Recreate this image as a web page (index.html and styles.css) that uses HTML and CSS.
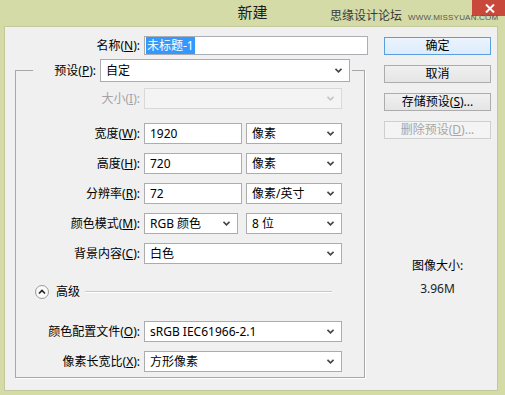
FILE: index.html
```html
<!DOCTYPE html>
<html lang="zh-CN">
<head>
    <meta charset="UTF-8">
    <title>新建</title>
    <link rel="stylesheet" href="styles.css">
</head>
<body>
    <div class="window">
        <!-- Title bar -->
        <div class="titlebar">
            <span></span>
            <h1 class="title">新建</h1>
            <div class="close">
                <svg width="10" height="9" viewBox="0 0 10 9"><path d="M1 0.5 L9 8.5 M9 0.5 L1 8.5" stroke="#fff" stroke-width="2"/></svg>
            </div>
            <div class="watermark">
                <span class="wm-cn">思缘设计论坛</span>
                <span class="wm-en">WWW.MISSYUAN.COM</span>
            </div>
        </div>

        <div class="frame">
            <div class="client">
                <!-- Form column -->
                <div class="form">
                    <div class="row name-row">
                        <label class="lbl name-lbl">名称(<u>N</u>):</label>
                        <div class="field w-name"><span class="selected">未标题-1</span></div>
                    </div>

                    <fieldset class="group">
                        <legend class="preset">
                            <label class="lbl preset-lbl">预设(<u>P</u>):</label>
                            <div class="field select w-preset">
                                <span>自定</span>
                                <svg class="chev" width="7" height="5" viewBox="0 0 7 5"><path d="M0.5 0.8 L3.5 3.8 L6.5 0.8" fill="none" stroke="#444" stroke-width="1.6"/></svg>
                            </div>
                        </legend>

                        <div class="row size-row disabled">
                            <label class="lbl">大小(<u>I</u>):</label>
                            <div class="field select w-wide off">
                                <span></span>
                                <svg class="chev" width="7" height="5" viewBox="0 0 7 5"><path d="M0.5 0.8 L3.5 3.8 L6.5 0.8" fill="none" stroke="#c4c4c4" stroke-width="1.6"/></svg>
                            </div>
                        </div>

                        <div class="rows">
                            <div class="row">
                                <label class="lbl">宽度(<u>W</u>):</label>
                                <div class="field w-num">1920</div>
                                <div class="field select w-unit">
                                    <span>像素</span>
                                    <svg class="chev" width="7" height="5" viewBox="0 0 7 5"><path d="M0.5 0.8 L3.5 3.8 L6.5 0.8" fill="none" stroke="#444" stroke-width="1.6"/></svg>
                                </div>
                            </div>
                            <div class="row">
                                <label class="lbl">高度(<u>H</u>):</label>
                                <div class="field w-num">720</div>
                                <div class="field select w-unit">
                                    <span>像素</span>
                                    <svg class="chev" width="7" height="5" viewBox="0 0 7 5"><path d="M0.5 0.8 L3.5 3.8 L6.5 0.8" fill="none" stroke="#444" stroke-width="1.6"/></svg>
                                </div>
                            </div>
                            <div class="row">
                                <label class="lbl">分辨率(<u>R</u>):</label>
                                <div class="field w-num">72</div>
                                <div class="field select w-unit">
                                    <span>像素/英寸</span>
                                    <svg class="chev" width="7" height="5" viewBox="0 0 7 5"><path d="M0.5 0.8 L3.5 3.8 L6.5 0.8" fill="none" stroke="#444" stroke-width="1.6"/></svg>
                                </div>
                            </div>
                            <div class="row">
                                <label class="lbl">颜色模式(<u>M</u>):</label>
                                <div class="field select w-mode">
                                    <span>RGB 颜色</span>
                                    <svg class="chev" width="7" height="5" viewBox="0 0 7 5"><path d="M0.5 0.8 L3.5 3.8 L6.5 0.8" fill="none" stroke="#444" stroke-width="1.6"/></svg>
                                </div>
                                <div class="field select w-unit">
                                    <span>8 位</span>
                                    <svg class="chev" width="7" height="5" viewBox="0 0 7 5"><path d="M0.5 0.8 L3.5 3.8 L6.5 0.8" fill="none" stroke="#444" stroke-width="1.6"/></svg>
                                </div>
                            </div>
                            <div class="row">
                                <label class="lbl">背景内容(<u>C</u>):</label>
                                <div class="field select w-wide">
                                    <span>白色</span>
                                    <svg class="chev" width="7" height="5" viewBox="0 0 7 5"><path d="M0.5 0.8 L3.5 3.8 L6.5 0.8" fill="none" stroke="#444" stroke-width="1.6"/></svg>
                                </div>
                            </div>
                        </div>

                        <!-- Advanced toggle -->
                        <div class="advanced">
                            <span class="adv-icon">
                                <svg width="14" height="14" viewBox="0 0 14 14"><circle cx="7" cy="7" r="6.5" fill="#fafafa" stroke="#9a9a9a"/><path d="M4 8.5 L7 5.5 L10 8.5" fill="none" stroke="#222" stroke-width="1.6"/></svg>
                            </span>
                            <span class="adv-text">高级</span>
                            <span class="adv-line"></span>
                        </div>

                        <div class="rows adv-rows">
                            <div class="row">
                                <label class="lbl">颜色配置文件(<u>O</u>):</label>
                                <div class="field select w-wide">
                                    <span>sRGB IEC61966-2.1</span>
                                    <svg class="chev" width="7" height="5" viewBox="0 0 7 5"><path d="M0.5 0.8 L3.5 3.8 L6.5 0.8" fill="none" stroke="#444" stroke-width="1.6"/></svg>
                                </div>
                            </div>
                            <div class="row">
                                <label class="lbl">像素长宽比(<u>X</u>):</label>
                                <div class="field select w-wide">
                                    <span>方形像素</span>
                                    <svg class="chev" width="7" height="5" viewBox="0 0 7 5"><path d="M0.5 0.8 L3.5 3.8 L6.5 0.8" fill="none" stroke="#444" stroke-width="1.6"/></svg>
                                </div>
                            </div>
                        </div>
                    </fieldset>
                </div>

                <!-- Buttons column -->
                <div class="side">
                    <button class="btn btn-default">确定</button>
                    <button class="btn">取消</button>
                    <button class="btn">存储预设(<u>S</u>)...</button>
                    <button class="btn" disabled>删除预设(<u>D</u>)...</button>

                    <div class="info">
                        <p class="info-label">图像大小:</p>
                        <p class="info-value">3.96M</p>
                    </div>
                </div>
            </div>
        </div>
    </div>
</body>
</html>
```

FILE: styles.css
```css
/* Reset */
* {
    box-sizing: border-box;
    margin: 0;
    padding: 0;
}

body {
    font-family: "Noto Sans", "Noto Sans CJK SC", sans-serif;
    font-size: 12px;
    line-height: 16px;
    color: #000;
    background: #d5dba6;
}

/* Window frame */
.window {
    width: 505px;
    height: 395px;
    display: flex;
    flex-direction: column;
    background: #d5dba6;
}

.titlebar {
    position: relative;
    height: 26px;
    display: grid;
    grid-template-columns: 1fr auto 1fr;
}

.title {
    font-size: 15px;
    font-weight: normal;
    line-height: 24px;
    color: #1c1c1c;
}

.close {
    justify-self: end;
    width: 33px;
    height: 16px;
    background: #c9483c;
    display: flex;
    align-items: center;
    justify-content: center;
    padding-left: 2px;
}

.watermark {
    position: absolute;
    left: 330px;
    top: 7px;
    display: flex;
    align-items: baseline;
    gap: 6px;
}

.wm-cn {
    font-family: "Noto Sans CJK SC", sans-serif;
    font-size: 12px;
    color: #3a3a3a;
}

.wm-en {
    font-family: "Liberation Sans", sans-serif;
    font-size: 8px;
    letter-spacing: 0.2px;
    color: #555;
}

.frame {
    flex: 1;
    padding: 0 7px 4px 4px;
    display: flex;
}

.client {
    flex: 1;
    display: flex;
    background: #f0f0f0;
    border: 1px solid #c3c99a;
}

/* Form column */
.form {
    width: 379px;
    padding-top: 9px;
}

.row {
    display: flex;
    align-items: center;
    height: 21px;
}

.lbl {
    width: 124px;
    margin-right: 4px;
    text-align: right;
    white-space: nowrap;
}

.name-row {
    height: 19px;
}

.name-lbl {
    width: 135px;
}

.field {
    height: 21px;
    display: flex;
    align-items: center;
    padding: 0 5px;
    background: #fff;
    border: 1px solid #abadb3;
    white-space: nowrap;
}

.select {
    justify-content: space-between;
    border-color: #acacac;
    padding-right: 7px;
}

.field.off {
    background: #f4f4f4;
    border-color: #d9d9d9;
}

.w-name {
    width: 224px;
    height: 19px;
    padding-left: 1px;
}

.selected {
    background: #3399ff;
    color: #fff;
    padding: 0 1px;
    line-height: 17px;
}

.w-preset {
    width: 250px;
    height: 23px;
}

.w-wide {
    width: 198px;
}

.w-num {
    width: 98px;
}

.w-unit {
    width: 96px;
    margin-left: 4px;
}

.w-mode {
    width: 94px;
}

.w-mode + .w-unit {
    margin-left: 8px;
}

/* Group box */
.group {
    width: 350px;
    margin: 4px 0 0 10px;
    padding: 6px 0 5px 0;
    border: 1px solid #a7a7a7;
    box-shadow: 1px 1px 0 #fff;
}

.preset {
    display: flex;
    align-items: center;
    margin-left: 17px;
    padding-right: 2px;
    background: #f0f0f0;
}

.preset-lbl {
    width: 63px;
}

.disabled .lbl {
    color: #a3a3a3;
}

.rows {
    display: flex;
    flex-direction: column;
    gap: 9px;
    margin-top: 14px;
}

/* Advanced toggle */
.advanced {
    display: flex;
    align-items: center;
    height: 16px;
    margin-top: 20px;
    padding-left: 19px;
}

.adv-icon {
    display: flex;
    width: 14px;
    height: 14px;
}

.adv-text {
    margin-left: 7px;
}

.adv-line {
    flex: 1;
    height: 2px;
    margin: 0 32px 0 5px;
    border-top: 1px solid #c9c9c9;
    border-bottom: 1px solid #fff;
}

.adv-rows {
    margin-top: 21px;
}

/* Buttons column */
.side {
    width: 107px;
    padding-top: 10px;
    display: flex;
    flex-direction: column;
    gap: 10px;
}

.btn {
    height: 18px;
    font-family: inherit;
    font-size: 12px;
    line-height: 14px;
    color: #000;
    background: linear-gradient(#f0f0f0, #e5e5e5);
    border: 1px solid #acacac;
}

.btn-default {
    background: linear-gradient(#ecf4fc, #dcecfc);
    border-color: #5a9ee0;
}

.btn:disabled {
    background: #f4f4f4;
    border-color: #cfcfcf;
    color: #a6a6a6;
}

.info {
    margin-top: 109px;
    text-align: center;
}

.info-value {
    margin-top: 7px;
    color: #222;
}
```
